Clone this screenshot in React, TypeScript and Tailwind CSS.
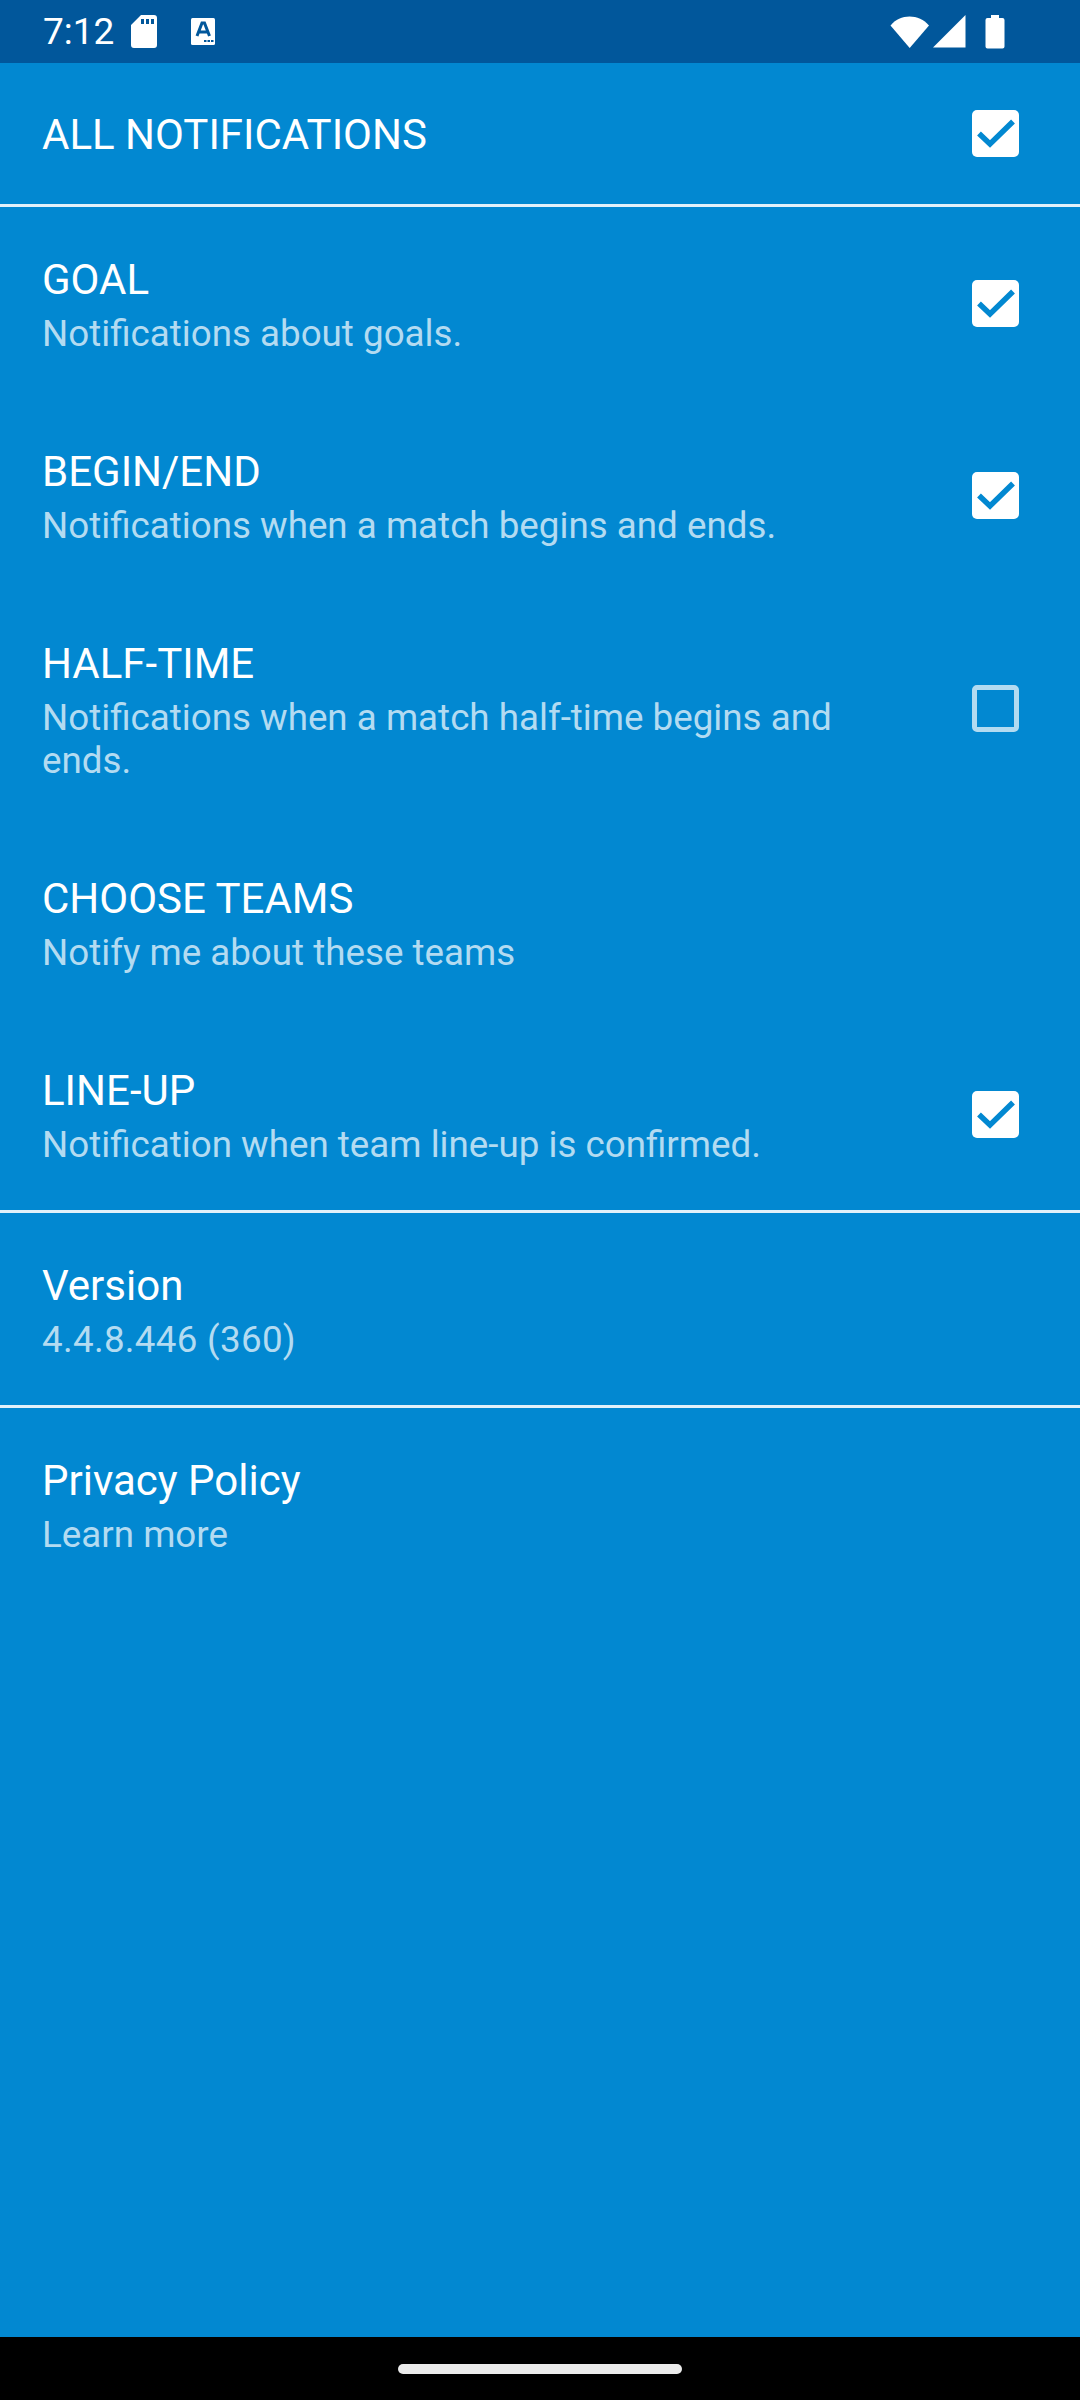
const Check = ({ on }: { on: boolean }) =>
  on ? (
    <div className="w-[47px] h-[47px] rounded-[5px] bg-white flex items-center justify-center">
      <svg width="47" height="47" viewBox="0 0 47 47" fill="none">
        <path d="M7 23.5 L18 34 L41 11.5" stroke="#0288d1" strokeWidth="5.5" />
      </svg>
    </div>
  ) : (
    <div className="w-[47px] h-[47px] rounded-[5px] border-[5.5px] border-[#b3dbf1]" />
  );

const Row = ({ title, sub, check, cls, subCls }: { title: string; sub?: string; check?: boolean; cls: string; subCls?: string }) => (
  <div className={`flex items-center pl-[42px] pr-[61px] ${cls}`}>
    <div className={`flex-1 min-w-0 pr-[90px] ${sub ? "pb-[3px]" : "pt-[2px]"}`}>
      <div className={`text-[42px] text-white ${sub ? "leading-[64px]" : "leading-[56px]"}`}>{title}</div>
      {sub && <div className={`text-[36.75px] leading-[43px] text-[#b3dbf1] ${subCls ?? ""}`}>{sub}</div>}
    </div>
    {check !== undefined && <Check on={check} />}
  </div>
);

const Divider = () => <div className="h-[3px] bg-[#e1f1fa]" />;

export default function App() {
  return (
    <div className="w-[1080px] h-[2400px] flex flex-col bg-[#0288d1] font-['Roboto',sans-serif]">
      <div className="h-[63px] bg-[#01579b] flex items-center pl-[43px] pr-[75px] text-white shrink-0">
        <span className="text-[37px] leading-[63px]">7:12</span>
        <svg className="ml-[16px]" width="28" height="34" viewBox="0 0 28 34">
          <path fillRule="evenodd" d="M11 0H24a3 3 0 0 1 3 3V30a3 3 0 0 1-3 3H4a3 3 0 0 1-3-3V10ZM11 4V9H14V4ZM16 4V9H19V4ZM21 4V9H24V4Z" fill="#fff" />
        </svg>
        <svg className="ml-[33px]" width="25" height="28" viewBox="0 0 25 28">
          <rect x="0" y="0" width="24" height="27" rx="1.5" fill="#fff" />
          <path d="M6 18 L11 5 H13.5 L18.5 18 M8 14 H16.5" stroke="#01579b" strokeWidth="3" fill="none" />
          <rect x="13" y="22" width="2.5" height="2" fill="#01579b" />
          <rect x="16.5" y="22" width="2.5" height="2" fill="#01579b" />
          <rect x="20" y="22" width="2.5" height="2" fill="#01579b" />
        </svg>
        <div className="flex-1" />
        <svg width="40" height="34" viewBox="0 0 40 34">
          <path d="M0.5 10.5 C10 -1.5 29 -1.5 39 10.5 L19.7 33 Z" fill="#fff" />
        </svg>
        <svg className="ml-[3px]" width="33" height="33" viewBox="0 0 33 33">
          <path d="M0 32.5 L32.5 0 V32.5 Z" fill="#fff" />
        </svg>
        <svg className="ml-[19px]" width="20" height="34" viewBox="0 0 20 34">
          <path d="M6 0H14V3H17.5a2 2 0 0 1 2 2V31.5a2 2 0 0 1-2 2H2.5a2 2 0 0 1-2-2V5a2 2 0 0 1 2-2H6Z" fill="#fff" />
        </svg>
      </div>

      <Row cls="h-[141px] shrink-0" title="ALL NOTIFICATIONS" check={true} />
      <Divider />
      <Row cls="h-[192px] shrink-0" title="GOAL" sub="Notifications about goals." check={true} />
      <Row cls="h-[192px] shrink-0" title="BEGIN/END" sub="Notifications when a match begins and ends." check={true} />
      <Row cls="h-[235px] shrink-0" title="HALF-TIME" sub="Notifications when a match half-time begins and ends." check={false} />
      <Row cls="h-[192px] shrink-0" title="CHOOSE TEAMS" sub="Notify me about these teams" />
      <Row cls="h-[192px] shrink-0" title="LINE-UP" sub="Notification when team line-up is confirmed." check={true} />
      <Divider />
      <Row cls="h-[192px] shrink-0" title="Version" sub="4.4.8.446 (360)" subCls="tracking-[0.3px]" />
      <Divider />
      <Row cls="h-[192px] shrink-0" title="Privacy Policy" sub="Learn more" />

      <div className="flex-1" />
      <div className="h-[63px] bg-black shrink-0 flex items-start justify-center pt-[27px]">
        <div className="w-[284px] h-[10px] rounded-full bg-[#ebebeb]" />
      </div>
    </div>
  );
}
